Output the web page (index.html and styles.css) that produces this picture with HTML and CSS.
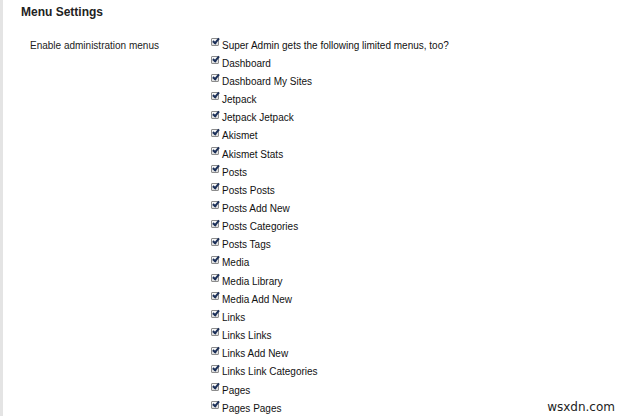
FILE: index.html
```html
<!DOCTYPE html>
<html>
<head>
<meta charset="utf-8">
<link rel="stylesheet" href="styles.css">
</head>
<body>
<div class="page">
  <h3 class="title">Menu Settings</h3>
  <div class="row">
    <div class="label">Enable administration menus</div>
    <ul class="opts">
      <li><span class="cb"></span>Super Admin gets the following limited menus, too?</li>
      <li><span class="cb"></span>Dashboard</li>
      <li><span class="cb"></span>Dashboard My Sites</li>
      <li><span class="cb"></span>Jetpack</li>
      <li><span class="cb"></span>Jetpack Jetpack</li>
      <li><span class="cb"></span>Akismet</li>
      <li><span class="cb"></span>Akismet Stats</li>
      <li><span class="cb"></span>Posts</li>
      <li><span class="cb"></span>Posts Posts</li>
      <li><span class="cb"></span>Posts Add New</li>
      <li><span class="cb"></span>Posts Categories</li>
      <li><span class="cb"></span>Posts Tags</li>
      <li><span class="cb"></span>Media</li>
      <li><span class="cb"></span>Media Library</li>
      <li><span class="cb"></span>Media Add New</li>
      <li><span class="cb"></span>Links</li>
      <li><span class="cb"></span>Links Links</li>
      <li><span class="cb"></span>Links Add New</li>
      <li><span class="cb"></span>Links Link Categories</li>
      <li><span class="cb"></span>Pages</li>
      <li><span class="cb"></span>Pages Pages</li>
    </ul>
  </div>
  <div class="mark">wsxdn.com</div>
</div>
</body>
</html>
```
FILE: styles.css
```css
html, body { margin: 0; padding: 0; background: #fff; }
body { font-family: "Liberation Sans", Arial, sans-serif; color: #222; }
.page {
  position: relative;
  width: 627px;
  height: 416px;
  overflow: hidden;
  box-sizing: border-box;
  padding-left: 18px;
  border-left: 3px solid #e4e4e4;
}
.title {
  margin: 0;
  padding-top: 4px;
  font-size: 12px;
  line-height: 16px;
  font-weight: bold;
  color: #222;
}
.row {
  display: flex;
  margin-top: 16.6px;
  margin-left: -3px;
}
.label {
  width: 181px;
  padding-left: 12px;
  font-size: 10px;
  line-height: 18.15px;
  color: #222;
}
.opts {
  list-style: none;
  margin: 0;
  padding: 0;
}
.opts li {
  display: flex;
  align-items: flex-start;
  font-size: 10px;
  line-height: 18.15px;
  color: #111;
}
.cb {
  width: 6px;
  height: 6px;
  margin-top: 1.4px;
  margin-right: 3px;
  border: 1px solid #8c8c8c;
  border-radius: 1px;
  background: linear-gradient(#fbfbfb, #dedede);
  position: relative;
  flex: none;
}
.cb::after {
  content: "";
  position: absolute;
  left: 2px;
  top: -2px;
  width: 2px;
  height: 5px;
  border-right: 2px solid #1b2f58;
  border-bottom: 2px solid #1b2f58;
  transform: rotate(40deg);
}
.mark {
  position: absolute;
  right: 12px;
  bottom: 2px;
  font-family: "DejaVu Sans", sans-serif;
  font-size: 12px;
  color: #222;
}
```
